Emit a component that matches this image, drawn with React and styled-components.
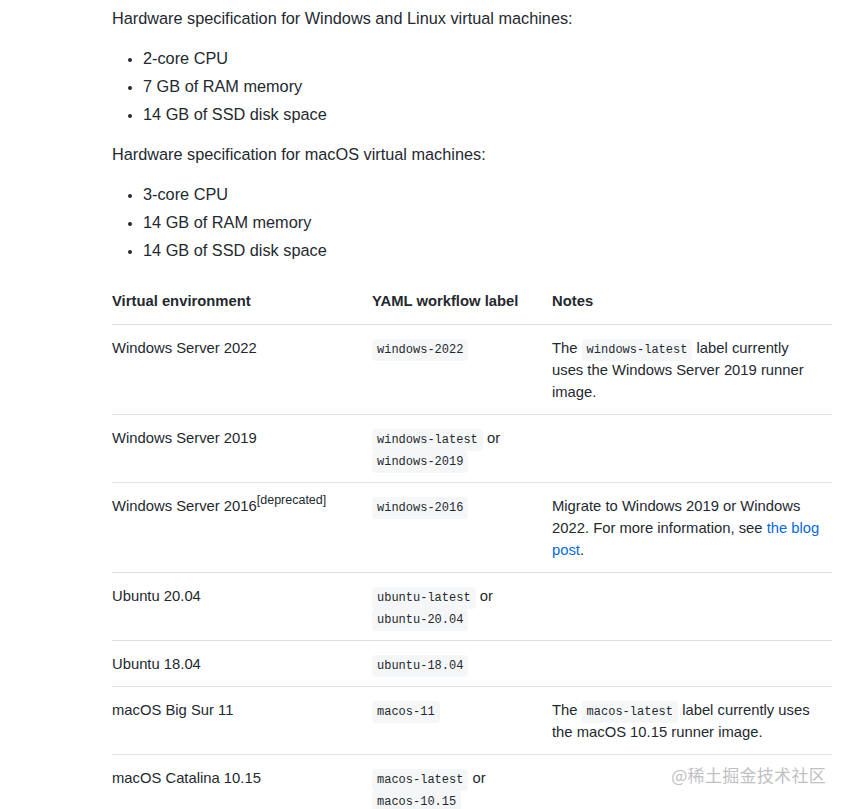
import React from "react";
import styled, { createGlobalStyle } from "styled-components";

const GlobalStyle = createGlobalStyle`
  body {
    margin: 0;
    background: #fff;
    color: #24292f;
    font-family: "Liberation Sans", Arial, sans-serif;
  }
`;

const Page = styled.div`
  position: relative;
  width: 848px;
  height: 809px;
  overflow: hidden;
  padding: 7px 16px 0 112px;
  box-sizing: border-box;
`;

const Para = styled.p`
  margin: 0;
  font-size: 16.3px;
  line-height: 22px;
`;

const List = styled.ul`
  margin: 17px 0 17px;
  padding-left: 31px;
  font-size: 16.3px;

  li {
    line-height: 24px;
    margin-bottom: 4px;
  }
  li::marker {
    font-size: 14px;
  }
`;

const Table = styled.table`
  width: 720px;
  margin-top: 16px;
  border-collapse: collapse;
  table-layout: fixed;
  font-size: 14.8px;
  line-height: 22px;

  th {
    text-align: left;
    font-weight: 700;
    padding: 11px 12px 12px 0;
    vertical-align: top;
  }

  td {
    padding: 12px 12px 11px 0;
    vertical-align: top;
  }

  thead tr,
  tbody tr {
    border-bottom: 1px solid #dde1e5;
  }
  tbody tr:last-child {
    border-bottom: none;
  }
`;

const Code = styled.code`
  font-family: "Liberation Mono", "DejaVu Sans Mono", monospace;
  font-size: 12px;
  line-height: 1;
  white-space: nowrap;
  background: #f4f6f8;
  border-radius: 4px;
  padding: 4px 5px;
`;

const Sup = styled.sup`
  font-size: 12.5px;
  line-height: 0;
  vertical-align: 0.6em;
`;

const Link = styled.a`
  color: #0969da;
  text-decoration: none;
`;

const Watermark = styled.div`
  position: absolute;
  right: 22px;
  bottom: 22px;
  font-family: "Noto Sans CJK SC", sans-serif;
  font-size: 17px;
  color: #bfc1c4;
  text-shadow: 0 0 2px #fff;
  letter-spacing: 0.3px;
`;

const rows = [
  {
    env: "Windows Server 2022",
    label: <Code>windows-2022</Code>,
    notes: (
      <>
        The <Code>windows-latest</Code> label currently uses the Windows
        Server 2019 runner image.
      </>
    ),
  },
  {
    env: "Windows Server 2019",
    label: (
      <>
        <Code>windows-latest</Code> or <Code>windows-2019</Code>
      </>
    ),
  },
  {
    env: (
      <>
        Windows Server 2016<Sup>[deprecated]</Sup>
      </>
    ),
    label: <Code>windows-2016</Code>,
    notes: (
      <>
        Migrate to Windows 2019 or Windows 2022. For more information, see{" "}
        <Link href="#">the blog post</Link>.
      </>
    ),
  },
  {
    env: "Ubuntu 20.04",
    label: (
      <>
        <Code>ubuntu-latest</Code> or <Code>ubuntu-20.04</Code>
      </>
    ),
  },
  { env: "Ubuntu 18.04", label: <Code>ubuntu-18.04</Code> },
  {
    env: "macOS Big Sur 11",
    label: <Code>macos-11</Code>,
    notes: (
      <>
        The <Code>macos-latest</Code> label currently uses the macOS 10.15
        runner image.
      </>
    ),
  },
  {
    env: "macOS Catalina 10.15",
    label: (
      <>
        <Code>macos-latest</Code> or <Code>macos-10.15</Code>
      </>
    ),
  },
];

export default function App() {
  return (
    <Page>
      <GlobalStyle />
      <Para>Hardware specification for Windows and Linux virtual machines:</Para>
      <List>
        <li>2-core CPU</li>
        <li>7 GB of RAM memory</li>
        <li>14 GB of SSD disk space</li>
      </List>
      <Para>Hardware specification for macOS virtual machines:</Para>
      <List>
        <li>3-core CPU</li>
        <li>14 GB of RAM memory</li>
        <li>14 GB of SSD disk space</li>
      </List>
      <Table>
        <colgroup>
          <col style={{ width: 260 }} />
          <col style={{ width: 180 }} />
          <col />
        </colgroup>
        <thead>
          <tr>
            <th>Virtual environment</th>
            <th>YAML workflow label</th>
            <th>Notes</th>
          </tr>
        </thead>
        <tbody>
          {rows.map((r, i) => (
            <tr key={i}>
              <td>{r.env}</td>
              <td>{r.label}</td>
              <td>{r.notes}</td>
            </tr>
          ))}
        </tbody>
      </Table>
      <Watermark>@稀土掘金技术社区</Watermark>
    </Page>
  );
}
